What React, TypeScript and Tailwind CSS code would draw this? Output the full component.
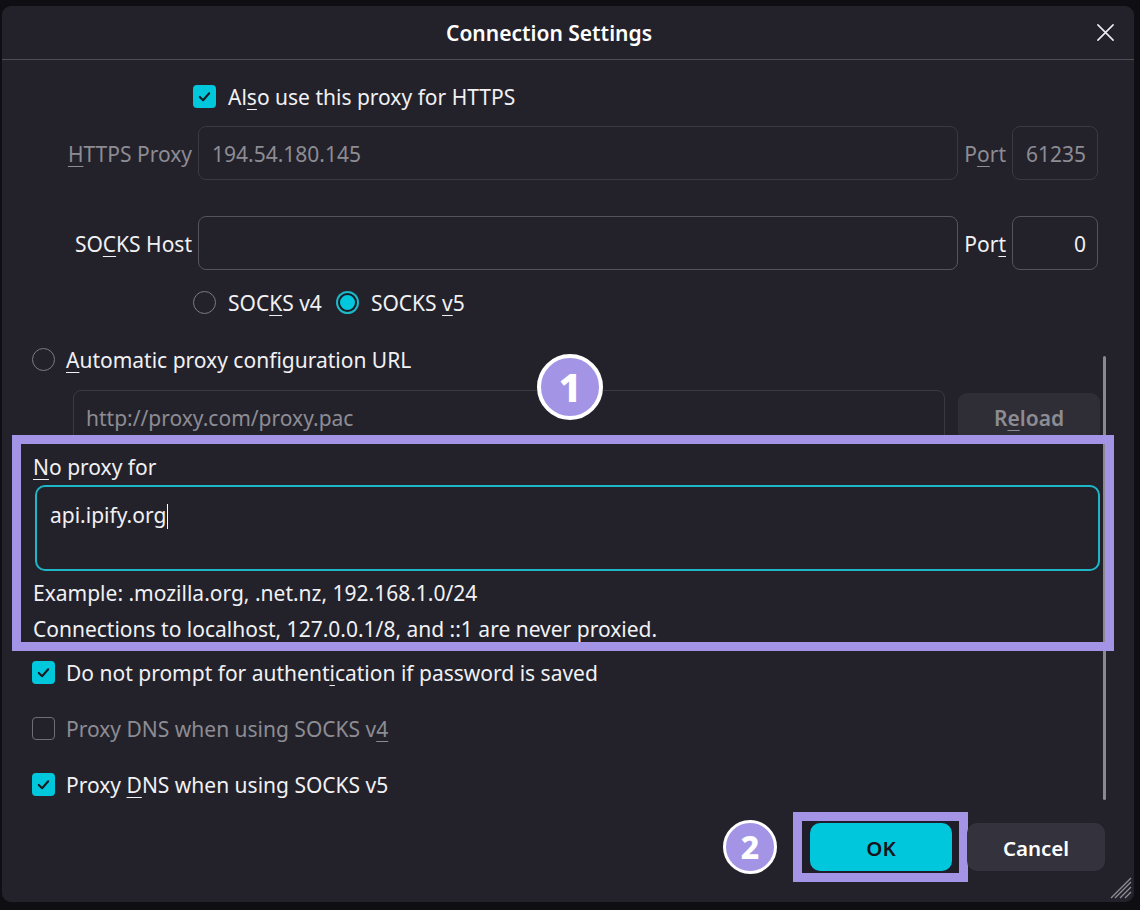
import React from "react";

const F = { fontFamily: '"Noto Sans", "Open Sans", sans-serif' } as const;

function Check({ on, disabled }: { on?: boolean; disabled?: boolean }) {
  if (on) {
    return (
      <span className="flex h-[23px] w-[23px] shrink-0 items-center justify-center rounded-[4px] bg-[#00c7dc]">
        <svg width="15" height="15" viewBox="0 0 16 16" fill="none">
          <path d="M3 8.5 L6.5 12 L13 4.5" stroke="#1a1a22" strokeWidth="2.2" strokeLinecap="round" strokeLinejoin="round" />
        </svg>
      </span>
    );
  }
  return (
    <span
      className={
        "h-[23px] w-[23px] shrink-0 rounded-[4px] border " +
        (disabled ? "border-[#6f6e76]" : "border-[#8a8990]")
      }
    />
  );
}

function Radio({ on }: { on?: boolean }) {
  if (on) {
    return (
      <span className="flex h-[23px] w-[23px] shrink-0 items-center justify-center rounded-full bg-[#1bb9c9]">
        <span className="h-[19px] w-[19px] rounded-full border-[2px] border-[#1c1b23] bg-[#00c7dc]" />
      </span>
    );
  }
  return <span className="h-[23px] w-[23px] shrink-0 rounded-full border border-[#7c7b82]" />;
}

function U({ children }: { children: React.ReactNode }) {
  return <span className="underline decoration-1 underline-offset-[4px]">{children}</span>;
}

export default function App() {
  return (
    <div className="min-h-[910px] w-[1140px] bg-[#0f0f13] pt-[6px] pl-[2px]" style={F}>
      <div className="relative h-[896px] w-[1132px] overflow-hidden rounded-[9px] bg-[#23222b] text-[21px] text-[#f1f1f4]">
        {/* header */}
        <div className="flex h-[54px] items-center border-b border-[#4d4c57] pr-[19px]">
          <div className="flex-1 pt-[2px] text-center text-[21px] font-semibold leading-none text-white">Connection Settings</div>
          <svg width="19" height="19" viewBox="0 0 20 20" className="shrink-0">
            <path d="M2 2 L18 18 M18 2 L2 18" stroke="#ececf0" strokeWidth="1.7" strokeLinecap="round" />
          </svg>
        </div>

        {/* row: also use this proxy */}
        <div className="mt-[24px] flex h-[24px] items-center pl-[191px]">
          <Check on />
          <span className="ml-[12px] pt-[2px] leading-none">
            Al<U>s</U>o use this proxy for HTTPS
          </span>
        </div>

        {/* HTTPS proxy */}
        <div className="mt-[18px] flex h-[54px] items-center pr-[36px]">
          <div className="w-[190px] pt-[4px] text-right text-[#8d8c93]">
            <U>H</U>TTPS Proxy
          </div>
          <div className="ml-[6px] flex h-full flex-1 items-center rounded-[8px] border border-[#3a3942] pl-[13px] pt-[4px] text-[#8d8c93]">
            194.54.180.145
          </div>
          <div className="mx-[6px] pt-[4px] text-[#8d8c93]">
            P<U>o</U>rt
          </div>
          <div className="flex h-full w-[86px] items-center justify-end rounded-[8px] border border-[#3a3942] pr-[11px] pt-[4px] text-[#8d8c93]">
            61235
          </div>
        </div>

        {/* SOCKS host */}
        <div className="mt-[36px] flex h-[54px] items-center pr-[36px]">
          <div className="w-[190px] pt-[4px] text-right">
            SO<U>C</U>KS Host
          </div>
          <div className="ml-[6px] h-full flex-1 rounded-[8px] border border-[#55545e]" />
          <div className="mx-[6px] pt-[4px]">
            Por<U>t</U>
          </div>
          <div className="flex h-full w-[86px] items-center justify-end rounded-[8px] border border-[#55545e] pr-[11px] pt-[4px]">
            0
          </div>
        </div>

        {/* socks version radios */}
        <div className="mt-[20px] flex h-[24px] items-center pl-[191px]">
          <Radio />
          <span className="ml-[12px] pt-[4px]">
            SOC<U>K</U>S v4
          </span>
          <span className="ml-[14px]">
            <Radio on />
          </span>
          <span className="ml-[12px] pt-[4px]">
            SOCKS <U>v</U>5
          </span>
        </div>

        {/* automatic proxy */}
        <div className="mt-[33px] flex h-[24px] items-center pl-[30px]">
          <Radio />
          <span className="ml-[11px] pt-[4px]">
            <U>A</U>utomatic proxy configuration URL
          </span>
        </div>

        <div className="mt-[19px] flex h-[54px] items-start pr-[34px]">
          <div className="ml-[71px] flex h-[54px] w-[872px] items-center rounded-[8px] border border-[#3a3942] pl-[12px] pt-[4px] text-[#8d8c93]">
            http://proxy.com/proxy.pac
          </div>
          <div className="ml-[13px] mt-[3px] flex h-[48px] flex-1 items-center justify-center rounded-[9px] bg-[#2f2e37] pt-[3px] font-semibold text-[#8d8c93]">
            R<U>e</U>load
          </div>
        </div>

        {/* annotation box 1 */}
        <div className="relative z-10 -mt-[9px] ml-[10px] h-[216px] w-[1102px] border-[9px] border-[#a394e6] bg-[#23222b] px-[12px] pt-[9px]">
          <div className="h-[28px] leading-[28px]">
            <U>N</U>o proxy for
          </div>
          <div className="ml-[2px] mt-[4px] flex h-[86px] w-[1065px] items-start rounded-[10px] border-[2.5px] border-[#1db7c7] pl-[13px] pt-[15px]">
            <span className="leading-[26px]">api.ipify.org</span>
            <span className="ml-[1px] mt-[2px] h-[25px] w-[1px] bg-white" />
          </div>
          <div className="mt-[8px] h-[28px] leading-[28px]">Example: .mozilla.org, .net.nz, 192.168.1.0/24</div>
          <div className="mt-[8px] h-[28px] leading-[28px]">Connections to localhost, 127.0.0.1/8, and ::1 are never proxied.</div>
          <div className="absolute right-[0px] top-[0px] h-[198px] w-[2px] bg-[#8a8990]" />
        </div>

        {/* checkbox rows */}
        <div className="mt-[9px] flex h-[24px] items-center pl-[30px]">
          <Check on />
          <span className="ml-[11px] pt-[4px]">
            Do not prompt for authent<U>i</U>cation if password is saved
          </span>
        </div>
        <div className="mt-[32px] flex h-[24px] items-center pl-[30px]">
          <Check disabled />
          <span className="ml-[11px] pt-[4px] text-[#8d8c93]">
            Proxy DNS when using SOCKS v<U>4</U>
          </span>
        </div>
        <div className="mt-[32px] flex h-[24px] items-center pl-[30px]">
          <Check on />
          <span className="ml-[11px] pt-[4px]">
            Proxy <U>D</U>NS when using SOCKS v5
          </span>
        </div>

        {/* buttons */}
        <div className="mt-[16px] flex items-center justify-end pr-[29px]">
          <div className="flex h-[54px] w-[54px] items-center justify-center rounded-full border-[3px] border-white bg-[#a394e6] text-[32px] font-extrabold leading-none text-white">
            2
          </div>
          <div className="ml-[16px] flex h-[70px] w-[175px] items-center border-[9px] border-[#a394e6] bg-[#1e1d29] pl-[8px]">
            <div className="flex h-[48px] w-[142px] items-center justify-center rounded-[10px] bg-[#00c7dc] pt-[2px] text-[20.5px] font-semibold text-[#15141b]">
              OK
            </div>
          </div>
          <div className="-ml-[1px] flex h-[48px] w-[138px] items-center justify-center rounded-[10px] bg-[#34333d] pt-[2px] text-[20.5px] font-semibold text-white">
            Cancel
          </div>
        </div>

        {/* scrollbar */}
        <div className="absolute left-[1101px] top-[350px] h-[444px] w-[3px] rounded-full bg-[#8a8990]" />

        {/* badge 1 */}
        <div className="absolute left-[535px] top-[348px] z-20 flex h-[66px] w-[66px] items-center justify-center rounded-full border-[4px] border-white bg-[#a394e6] text-[40px] font-extrabold leading-none text-white">
          1
        </div>

        {/* resize grip */}
        <svg className="absolute bottom-[3px] right-[2px]" width="22" height="22" viewBox="0 0 22 22">
          <path d="M21 5 L5 21 M21 10 L10 21 M21 15 L15 21 M21 1 L1 21" stroke="#8f8e95" strokeWidth="1.3" />
        </svg>
      </div>
    </div>
  );
}
